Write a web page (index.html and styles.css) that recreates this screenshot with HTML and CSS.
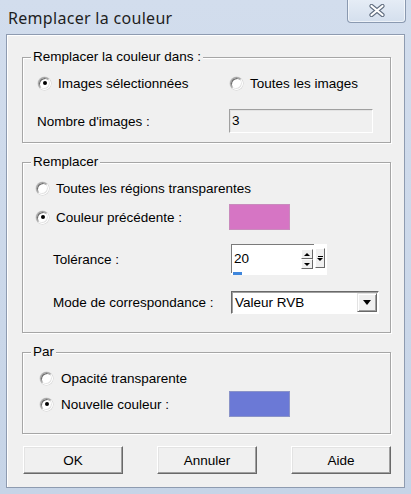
FILE: index.html
```html
<!DOCTYPE html>
<html lang="fr">
<head>
<meta charset="utf-8">
<title>Remplacer la couleur</title>
<link rel="stylesheet" href="styles.css">
</head>
<body>
<div class="window">
  <div class="titlebar">
    <span class="title">Remplacer la couleur</span>
    <div class="close">
      <svg width="16" height="13" viewBox="0 0 16 13">
        <path d="M2.5 2 L13.5 11 M13.5 2 L2.5 11" stroke="#5f6c7e" stroke-width="4.2" stroke-linecap="round" fill="none"/>
        <path d="M2.5 2 L13.5 11 M13.5 2 L2.5 11" stroke="#ffffff" stroke-width="2.2" stroke-linecap="round" fill="none"/>
      </svg>
    </div>
  </div>
  <div class="client">
    <div class="group g1">
      <span class="legend">Remplacer la couleur dans :</span>
      <div class="row r-radio">
        <label class="radio first"><span class="dot checked"></span><span>Images sélectionnées</span></label>
        <label class="radio"><span class="dot"></span><span>Toutes les images</span></label>
      </div>
      <div class="row r-count">
        <span class="lbl">Nombre d'images :</span>
        <div class="field">3</div>
      </div>
    </div>

    <div class="group g2">
      <span class="legend">Remplacer</span>
      <div class="row r-radio">
        <label class="radio"><span class="dot"></span><span>Toutes les régions transparentes</span></label>
      </div>
      <div class="row r-swatch">
        <label class="radio first"><span class="dot checked"></span><span>Couleur précédente :</span></label>
        <div class="swatch pink"></div>
      </div>
      <div class="row r-tol">
        <span class="lbl sub">Tolérance :</span>
        <div class="spinwrap">
          <div class="spin">
            <span class="val">20</span>
            <div class="arrows">
              <span class="sbtn"><i class="tri up"></i></span>
              <span class="sbtn"><i class="tri down"></i></span>
            </div>
            <span class="bar"></span>
          </div>
          <span class="pop"><i class="line"></i><i class="tri down"></i></span>
        </div>
      </div>
      <div class="row r-mode">
        <span class="lbl sub">Mode de correspondance :</span>
        <div class="select">
          <span class="val">Valeur RVB</span>
          <span class="drop"><i class="tri bigdown"></i></span>
        </div>
      </div>
    </div>

    <div class="group g3">
      <span class="legend">Par</span>
      <div class="row r-radio">
        <label class="radio"><span class="dot"></span><span>Opacité transparente</span></label>
      </div>
      <div class="row r-swatch">
        <label class="radio first"><span class="dot checked"></span><span>Nouvelle couleur :</span></label>
        <div class="swatch blue"></div>
      </div>
    </div>

    <div class="buttons">
      <button class="btn">OK</button>
      <button class="btn">Annuler</button>
      <button class="btn">Aide</button>
    </div>
  </div>
</div>
</body>
</html>
```
FILE: styles.css
```css
* { box-sizing: border-box; }
html, body { margin: 0; padding: 0; }
body {
  width: 411px;
  height: 494px;
  overflow: hidden;
  background: linear-gradient(#d2dded, #c6d4e7);
  font-family: "Liberation Sans", Arial, sans-serif;
  font-size: 13.5px;
  color: #000;
}
.window { width: 411px; height: 494px; }
.titlebar {
  height: 34px;
  display: flex;
  align-items: flex-start;
  justify-content: space-between;
  padding-left: 8px;
}
.title {
  font-family: "Noto Sans", "Open Sans", sans-serif;
  font-size: 16px;
  letter-spacing: 0.3px;
  line-height: 20px;
  margin-top: 8px;
  color: #1e1e1e;
}
.close {
  width: 59px;
  height: 24px;
  margin-right: 5px;
  margin-top: -1px;
  border: 1px solid #8a99b0;
  border-top: none;
  border-radius: 0 0 4px 4px;
  background: linear-gradient(#e6edf6, #d4dfed);
  box-shadow: inset 0 0 0 1px rgba(255,255,255,0.6);
  display: flex;
  align-items: center;
  justify-content: center;
}
.client {
  margin-left: 6px;
  width: 399px;
  height: 454px;
  background: #f0f0f0;
  border: 1px solid #8e9bb0;
  box-shadow: inset 1px 1px 0 #ffffff;
  padding: 22px 0 0 15px;
}
.group {
  position: relative;
  width: 369px;
  border: 1px solid #a6a6a6;
  box-shadow: 1px 1px 0 #fff, inset 1px 1px 0 #fff;
}
.legend {
  position: absolute;
  left: 8px;
  top: -9px;
  padding: 0 2px;
  line-height: 16px;
  background: #f0f0f0;
}
.g1 { height: 86px; padding: 15px 0 0 15px; }
.g2 { height: 171px; margin-top: 19px; padding: 15px 0 0 13px; }
.g3 { height: 82px; margin-top: 19px; padding: 15px 0 0 17px; }
.row { display: flex; align-items: center; }
.r-radio { height: 20px; }
.radio { display: flex; align-items: center; gap: 7px; }
.g1 .radio.first { width: 192px; }
.g2 .radio.first, .g3 .radio.first { width: 192px; }
.g3 .radio { gap: 8px; }
.dot {
  position: relative;
  width: 13px;
  height: 13px;
  border-radius: 50%;
  background: #fff;
  border: 1px solid;
  border-color: #a0a0a0 #ffffff #ffffff #a0a0a0;
  box-shadow: inset 1px 1px 0 #6c6c6c, inset -1px -1px 0 #e3e3e3, 0 0 0 0.5px #d0d0d0;
  flex: none;
}
.dot.checked::after {
  content: "";
  position: absolute;
  left: 3.5px;
  top: 3.5px;
  width: 4px;
  height: 4px;
  border-radius: 50%;
  background: #000;
}
.r-count { height: 24px; margin-top: 16px; margin-left: -1px; }
.r-count .lbl { width: 192px; }
.field {
  width: 144px;
  height: 24px;
  background: #f0f0f0;
  border: 1px solid;
  border-color: #a0a0a0 #ffffff #ffffff #a0a0a0;
  box-shadow: inset 1px 1px 0 #e3e3e3;
  padding: 3px 0 0 2px;
  line-height: 15px;
}
.r-swatch { height: 26px; margin-top: 6px; }
.swatch { width: 61px; height: 26px; border: 1px solid #b7a0b8; }
.swatch.pink { background: #d675c4; border-color: #c98bbd; }
.swatch.blue { background: #6b79d6; border-color: #8a93c8; }
.g2 .r-swatch .swatch { margin-left: 1px; }
.g3 .r-swatch .swatch { margin-left: -3px; }
.g3 .r-swatch { margin-top: 3px; }
.lbl.sub { width: 195px; padding-left: 17px; }
.r-tol { height: 31px; margin-top: 14px; }
.spinwrap {
  width: 96px;
  height: 31px;
  background: #fff;
  display: flex;
  align-items: flex-start;
}
.spin {
  position: relative;
  width: 83px;
  height: 29px;
  border-top: 1px solid #7a7a7a;
  border-left: 1px solid #7a7a7a;
  display: flex;
  justify-content: space-between;
  padding: 4px 1px 0 2px;
}
.spin .val { line-height: 15px; margin-top: 2px; }
.arrows { display: flex; flex-direction: column; margin-top: 0; }
.sbtn {
  width: 12px;
  height: 10px;
  background: #f0f0f0;
  border: 1px solid;
  border-color: #ffffff #696969 #696969 #ffffff;
  display: flex;
  align-items: center;
  justify-content: center;
}
.bar {
  position: absolute;
  left: 1px;
  bottom: -2px;
  width: 9px;
  height: 3px;
  background: #3f86dc;
}
.pop {
  width: 10px;
  height: 20px;
  margin: 4px 0 0 1px;
  background: #f0f0f0;
  border: 1px solid;
  border-color: #ffffff #696969 #696969 #ffffff;
  display: flex;
  flex-direction: column;
  align-items: center;
  justify-content: center;
  gap: 1px;
}
.pop .line { display: block; width: 5px; height: 1px; background: #000; }
.tri { display: block; width: 0; height: 0; border-left: 3px solid transparent; border-right: 3px solid transparent; }
.tri.up { border-bottom: 3px solid #000; }
.tri.down { border-top: 3px solid #000; }
.tri.bigdown { border-left-width: 4.5px; border-right-width: 4.5px; border-top: 5px solid #000; }
.r-mode { height: 23px; margin-top: 16px; }
.select {
  width: 148px;
  height: 23px;
  background: #fff;
  border: 1px solid;
  border-color: #696969 #ffffff #ffffff #696969;
  box-shadow: 1px 1px 0 #a0a0a0 inset;
  display: flex;
  align-items: center;
  justify-content: space-between;
  padding: 0 1px 0 3px;
}
.select .val { line-height: 15px; }
.drop {
  width: 20px;
  height: 19px;
  background: #f0f0f0;
  border: 1px solid;
  border-color: #e3e3e3 #696969 #696969 #e3e3e3;
  box-shadow: inset 1px 1px 0 #fff, inset -1px -1px 0 #a0a0a0;
  display: flex;
  align-items: center;
  justify-content: center;
}
.buttons {
  display: flex;
  gap: 34px;
  margin-top: 12px;
  margin-left: 1px;
}
.btn {
  width: 100px;
  height: 28px;
  font-family: "Liberation Sans", Arial, sans-serif;
  font-size: 13.5px;
  color: #000;
  background: #f0f0f0;
  border: 1px solid;
  border-color: #ffffff #696969 #696969 #ffffff;
  box-shadow: inset -1px -1px 0 #a0a0a0, inset 1px 1px 0 #e3e3e3;
  padding: 0;
}
```
